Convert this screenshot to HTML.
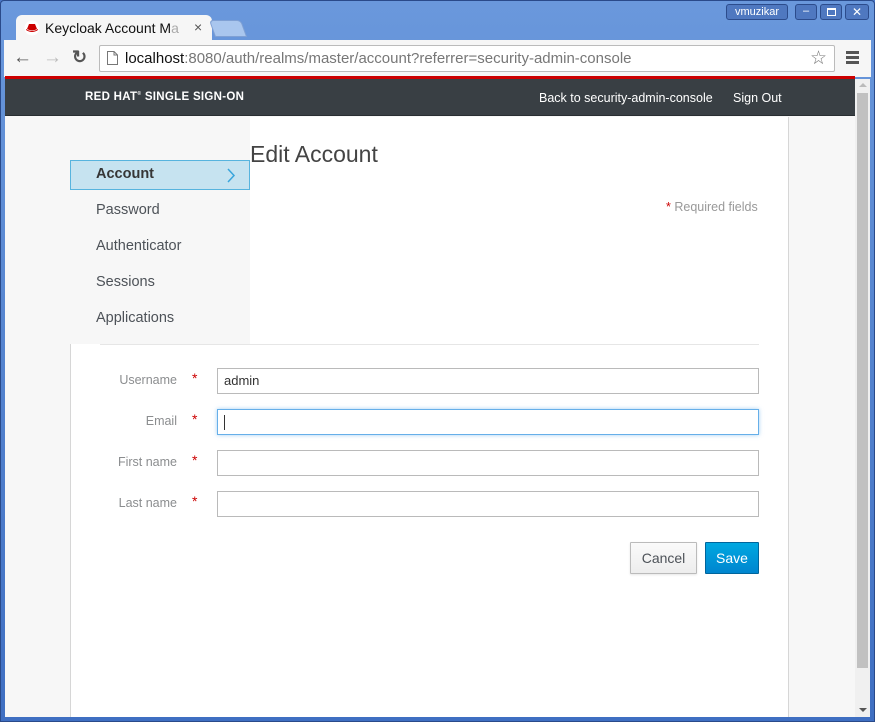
<!DOCTYPE html>
<html><head><meta charset="utf-8"><style>
*{box-sizing:border-box;margin:0;padding:0}
body{width:875px;height:722px;overflow:hidden;background:#4a78c8;font-family:"Liberation Sans",sans-serif;position:relative}
.abs{position:absolute}
.frame{left:0;top:0;width:875px;height:722px;background:linear-gradient(#6a98dc,#3f6fc2);border:1px solid #2a4a8a;border-radius:4px 4px 0 0}
.tab{left:16px;top:15px;width:196px;height:28px;background:#f6f6f6;border-radius:6px 6px 0 0;font-size:14px;color:#111;padding:5px 0 0 29px;white-space:nowrap;overflow:hidden}
.tab2{left:212px;top:20px;width:32px;height:17px;background:#a9c6ee;border:1px solid #7fa0d4;border-radius:4px 4px 0 0;transform:skewX(20deg)}
.toolbar{left:4px;top:40px;width:867px;height:37px;background:#f6f6f6}
.url{left:99px;top:45px;width:736px;height:27px;background:#fff;border:1px solid #bbb;border-radius:2px;font-size:15px;padding:4px 0 0 25px;color:#777}
.url b{font-weight:normal;color:#111}
.redline{left:5px;top:76px;width:850px;height:3px;background:#c00}
.nav{left:5px;top:79px;width:850px;height:37px;background:#393f44;border-bottom:1px solid #292e32}
.page{left:5px;top:116px;width:850px;height:601px;background:#f7f7f7}
.white{left:70px;top:117px;width:719px;height:600px;background:#fff;border-left:1px solid #d6d6d6;border-right:1px solid #d6d6d6}
.side{left:5px;top:116px;width:245px;height:228px;background:#f7f7f7}
.menu{font-size:14.5px;color:#4d5258;left:96px}
.sb{left:855px;top:79px;width:15px;height:638px;background:#f0f0f0}
.thumb{left:857px;top:93px;width:11px;height:575px;background:#c1c1c1}
label{position:absolute;font-size:12.5px;color:#8b8d8f;text-align:right;width:107px;left:70px}
.star{position:absolute;color:#c00;font-size:14px;left:192px}
.inp{position:absolute;left:217px;width:542px;height:26px;border:1px solid #bababa;background:#fff;font-size:13px;padding:4px 6px;color:#333}
.btn{position:absolute;top:542px;height:32px;font-size:14px;text-align:center;padding-top:7px;border-radius:1px}
.wb{border:1px solid #2c4c8c;border-radius:3px;background:#4f78c0;color:#fff}
</style></head><body>
<div class="abs frame"></div>
<div class="abs tab"><svg class="abs" style="left:8px;top:5px" width="16" height="16" viewBox="0 0 16 16"><circle cx="8" cy="8" r="7.5" fill="#fff"/><path d="M3 9 L5 4 L11 4 L13 9 Q8 12 3 9Z" fill="#c00"/><path d="M2 9 Q8 13 14 9 L14 10 Q8 14 2 10Z" fill="#c00"/></svg>Keycloak Account M<span style="color:#aaa">a</span><span class="abs" style="left:178px;top:4px;color:#555">×</span></div>
<div class="abs tab2"></div>
<div class="abs wb" style="left:726px;top:4px;width:62px;height:16px;font-size:11px;text-align:center;line-height:14px">vmuzikar</div>
<div class="abs wb" style="left:795px;top:4px;width:22px;height:16px;font-size:11px;text-align:center;line-height:12px">–</div>
<div class="abs wb" style="left:820px;top:4px;width:22px;height:16px"><div class="abs" style="left:6px;top:3px;width:9px;height:8px;border:1px solid #fff;border-top-width:2px"></div></div>
<div class="abs wb" style="left:845px;top:4px;width:24px;height:16px;font-size:12px;text-align:center;line-height:14px">✕</div>
<div class="abs toolbar"></div>
<div class="abs" style="left:13px;top:47px;font-size:19px;color:#555">←</div>
<div class="abs" style="left:43px;top:47px;font-size:19px;color:#bbb">→</div>
<div class="abs" style="left:72px;top:47px;font-size:18px;color:#555;font-weight:bold">↻</div>
<div class="abs url"><svg class="abs" style="left:7px;top:5px" width="11" height="14"><path d="M0.5 0.5 H7 L10.5 4 V13.5 H0.5Z M7 0.5 V4 H10.5" fill="#fff" stroke="#777"/></svg><b>localhost</b>:8080/auth/realms/master/account?referrer=security-admin-console<span class="abs" style="left:710px;top:1px;font-size:19px;color:#777">☆</span></div>
<div class="abs" style="left:846px;top:51px;width:13px;height:13px;border-top:3px solid #555;border-bottom:3px solid #555"><div style="margin-top:2px;height:3px;background:#555"></div></div>
<div class="abs redline"></div>
<div class="abs nav"></div>
<div class="abs" style="left:85px;top:91px;color:#fff;font-size:11.5px;font-weight:bold;letter-spacing:.3px">RED HAT<sup style="font-size:5px">®</sup> SINGLE SIGN-ON</div>
<div class="abs" style="left:539px;top:91px;color:#fff;font-size:12.5px">Back to security-admin-console</div>
<div class="abs" style="left:733px;top:91px;color:#fff;font-size:12.5px">Sign Out</div>
<div class="abs page"></div>
<div class="abs white"></div>
<div class="abs side"></div>
<div class="abs" style="left:70px;top:160px;width:180px;height:30px;background:#c6e3f0;border:1px solid #57b4de"></div>
<div class="abs menu" style="top:166px;font-weight:bold;color:#363636">Account</div>
<svg class="abs" style="left:226px;top:168px" width="10" height="15"><path d="M2 1 L8 7.5 L2 14" fill="none" stroke="#39a5dc" stroke-width="1.5"/></svg>
<div class="abs menu" style="top:202px">Password</div>
<div class="abs menu" style="top:238px">Authenticator</div>
<div class="abs menu" style="top:274px">Sessions</div>
<div class="abs menu" style="top:310px">Applications</div>
<div class="abs" style="left:250px;top:141px;font-size:23px;color:#444">Edit Account</div>
<div class="abs" style="left:666px;top:200px;font-size:12.5px;color:#999"><span style="color:#c00">*</span> Required fields</div>
<div class="abs" style="left:100px;top:344px;width:659px;height:1px;background:#e6e6e6"></div>
<label style="top:373px">Username</label><span class="star" style="top:370px">*</span><div class="inp" style="top:368px">admin</div>
<label style="top:414px">Email</label><span class="star" style="top:411px">*</span><div class="inp" style="top:409px;border-color:#66afe9;box-shadow:0 0 4px rgba(102,175,233,.6)"><span style="display:inline-block;width:1px;height:15px;background:#333;margin-top:1px"></span></div>
<label style="top:455px">First name</label><span class="star" style="top:452px">*</span><div class="inp" style="top:450px"></div>
<label style="top:496px">Last name</label><span class="star" style="top:493px">*</span><div class="inp" style="top:491px"></div>
<div class="btn" style="left:630px;width:67px;background:linear-gradient(#fafafa,#ededed);border:1px solid #bbb;color:#4d5258;box-shadow:0 1px 2px rgba(0,0,0,.1)">Cancel</div>
<div class="btn" style="left:705px;width:54px;background:linear-gradient(#00a8e1,#0085cf);border:1px solid #00659c;color:#fff">Save</div>
<div class="abs sb"></div>
<div class="abs" style="left:859px;top:83px;width:0;height:0;border-left:4px solid transparent;border-right:4px solid transparent;border-bottom:4px solid #bbb"></div>
<div class="abs thumb"></div>
<div class="abs" style="left:859px;top:708px;width:0;height:0;border-left:4px solid transparent;border-right:4px solid transparent;border-top:4px solid #555"></div>
</body></html>
